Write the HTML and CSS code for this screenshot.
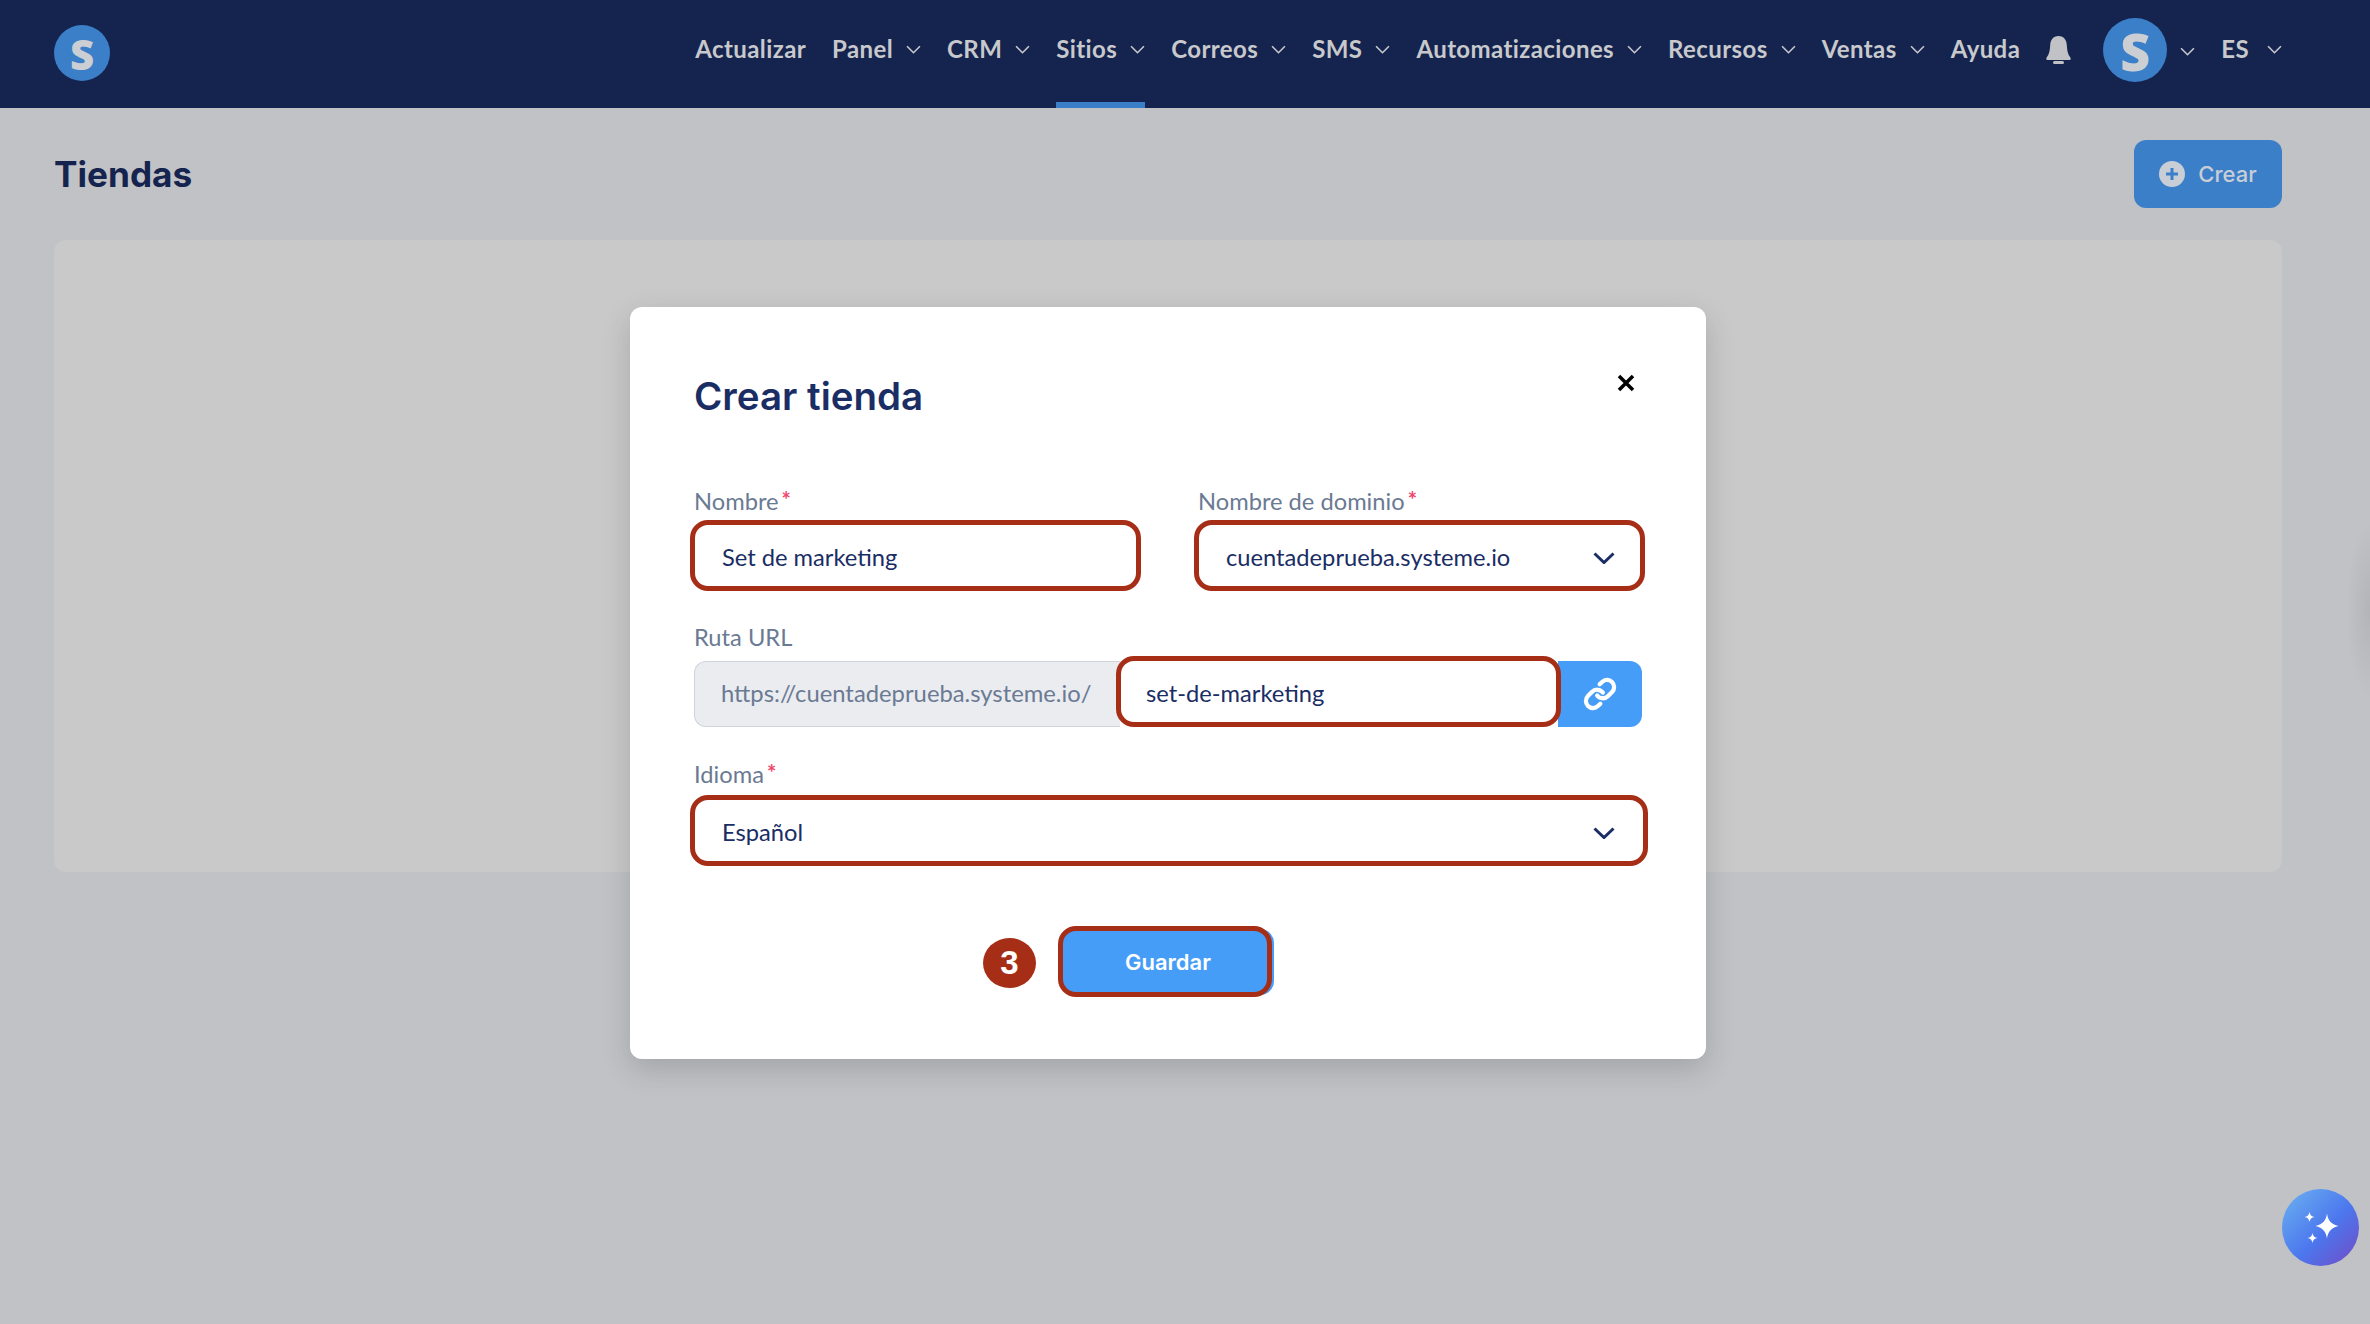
FILE: index.html
```html
<!DOCTYPE html>
<html lang="es">
<head>
  <meta charset="UTF-8" />
  <meta name="viewport" content="width=device-width, initial-scale=1.0" />
  <title>Tiendas</title>
  <link rel="stylesheet" href="styles.css">
</head>
<body>
  <header class="topbar">
    <a class="logo">S</a>
    <nav class="nav">
      <a class="nav-item">Actualizar</a>
      <a class="nav-item">Panel <svg class="chev" viewBox="0 0 14 8"><path d="M1 1l6 6 6-6"/></svg></a>
      <a class="nav-item">CRM <svg class="chev" viewBox="0 0 14 8"><path d="M1 1l6 6 6-6"/></svg></a>
      <a class="nav-item active">Sitios <svg class="chev" viewBox="0 0 14 8"><path d="M1 1l6 6 6-6"/></svg></a>
      <a class="nav-item">Correos <svg class="chev" viewBox="0 0 14 8"><path d="M1 1l6 6 6-6"/></svg></a>
      <a class="nav-item">SMS <svg class="chev" viewBox="0 0 14 8"><path d="M1 1l6 6 6-6"/></svg></a>
      <a class="nav-item">Automatizaciones <svg class="chev" viewBox="0 0 14 8"><path d="M1 1l6 6 6-6"/></svg></a>
      <a class="nav-item">Recursos <svg class="chev" viewBox="0 0 14 8"><path d="M1 1l6 6 6-6"/></svg></a>
      <a class="nav-item">Ventas <svg class="chev" viewBox="0 0 14 8"><path d="M1 1l6 6 6-6"/></svg></a>
      <a class="nav-item">Ayuda</a>
      <svg class="bell" viewBox="0 0 25 28"><path d="M12.500 0C18 0 20.500 4 20.800 9c.3 5 .7 9 3.500 12.500.9 1.200.3 2.500-1.200 2.500H1.900C.4 24-.2 22.700.7 21.500 3.500 18 3.900 14 4.200 9 4.500 4 7 0 12.500 0z"/><rect x="7" y="25" width="11" height="3" rx="1.500"/></svg>
      <div class="account">
        <span class="avatar">S</span>
        <svg class="chev" viewBox="0 0 14 8"><path d="M1 1l6 6 6-6"/></svg>
      </div>
      <a class="nav-item lang">ES <svg class="chev" viewBox="0 0 14 8"><path d="M1 1l6 6 6-6"/></svg></a>
    </nav>
  </header>

  <main class="page">
    <div class="page-head">
      <h1>Tiendas</h1>
      <button class="btn-create">
        <svg class="plus" viewBox="0 0 26 26"><circle cx="13" cy="13" r="13"/><path d="M13 7v12M7 13h12"/></svg>
        Crear
      </button>
    </div>
    <div class="card"></div>
  </main>

  <div class="modal">
    <h2>Crear tienda</h2>
    <svg class="close" viewBox="0 0 18 18"><path d="M2 2l14 14M16 2L2 16"/></svg>

    <div class="row-two">
      <div class="field">
        <label>Nombre<span class="req">*</span></label>
        <div class="input marked">Set de marketing</div>
      </div>
      <div class="field">
        <label>Nombre de dominio<span class="req">*</span></label>
        <div class="input select marked">
          cuentadeprueba.systeme.io
          <svg class="select-arrow" viewBox="0 0 22 12"><path d="M1.500 1.500L11 10.500l9.500-9"/></svg>
        </div>
      </div>
    </div>

    <div class="field">
      <label>Ruta URL</label>
      <div class="url-group">
        <div class="url-prefix">https://cuentadeprueba.systeme.io/</div>
        <div class="input url-slug marked">set-de-marketing</div>
        <div class="url-btn">
          <svg viewBox="0 0 24 24"><path d="M10 13a5 5 0 0 0 7.540.540l3-3a5 5 0 0 0-7.070-7.070l-1.720 1.710"/><path d="M14 11a5 5 0 0 0-7.540-.540l-3 3a5 5 0 0 0 7.070 7.070l1.710-1.710"/></svg>
        </div>
      </div>
    </div>

    <div class="field field-lang">
      <label>Idioma<span class="req">*</span></label>
      <div class="input select marked">
        Español
        <svg class="select-arrow" viewBox="0 0 22 12"><path d="M1.500 1.500L11 10.500l9.500-9"/></svg>
      </div>
    </div>

    <div class="actions">
      <button class="btn-save marked">
        <span class="step">3</span>
        Guardar
      </button>
    </div>
  </div>

  <button class="fab">
    <svg viewBox="0 0 36 36"><path d="M24 3.500C25 10.500 28 14 35.500 16 28 18 25 21.500 24 28.500 23 21.500 20 18 12.500 16 20 14 23 10.500 24 3.500z"/><path d="M6.500 2C7 5 8.500 6.500 11.500 7 8.500 7.500 7 9 6.500 12 6 9 4.500 7.500 1.500 7 4.500 6.500 6 5 6.500 2z"/><path d="M9.500 23C10 26 11.500 27.500 14.500 28 11.500 28.500 10 30 9.500 33 9 30 7.500 28.500 4.500 28 7.500 27.500 9 26 9.500 23z"/></svg>
  </button>
</body>
</html>
```

FILE: styles.css
```css
* {
  box-sizing: border-box;
}
html, body {
  height: 100%;
}
body {
  margin: 0;
  background: radial-gradient(ellipse 24px 90px at 100% 610px, rgba(0, 0, 0, 0.07), transparent) #c1c2c6;
  font-family: 'Lato', sans-serif;
  overflow: hidden;
  position: relative;
}

/* top bar */
.topbar {
  height: 108px;
  background: #15244f;
  padding: 0 88px 0 54px;
  display: flex;
  align-items: center;
  justify-content: space-between;
}
.logo {
  width: 56px;
  height: 56px;
  border-radius: 50%;
  background: #3b7fc9;
  color: #cbced2;
  font-family: 'Open Sans', sans-serif;
  font-weight: 800;
  font-size: 42px;
  display: flex;
  align-items: center;
  justify-content: center;
  margin-top: -2px;
}
.nav {
  height: 100%;
  display: flex;
  align-items: center;
  gap: 26px;
}
.nav-item {
  height: 100%;
  display: flex;
  align-items: center;
  gap: 13px;
  padding-bottom: 12px;
  color: #c8c9cc;
  font-size: 24px;
  font-weight: 700;
  letter-spacing: 0.4px;
  white-space: nowrap;
}
.nav-item.active {
  box-shadow: inset 0 -6px 0 #3b7fc9;
}
.chev {
  width: 15px;
  height: 9px;
  flex: none;
  margin-top: 3px;
  fill: none;
  stroke: #c8c9cc;
  stroke-width: 1.500;
}
.bell {
  width: 25px;
  height: 28px;
  fill: #c1c2c6;
  margin-top: -8px;
}
.account {
  display: flex;
  align-items: center;
  gap: 13px;
  margin: -8px 0 0 6px;
}
.avatar {
  width: 64px;
  height: 64px;
  border-radius: 50%;
  background: #3b7fc9;
  color: #cbced2;
  font-family: 'Open Sans', sans-serif;
  font-weight: 800;
  font-size: 52px;
  display: flex;
  align-items: center;
  justify-content: center;
}
.lang .chev {
  margin-left: 5px;
}

/* page */
.page {
  padding: 32px 88px 0 54px;
}
.page-head {
  height: 68px;
  display: flex;
  align-items: center;
  justify-content: space-between;
}
h1 {
  margin: 0;
  color: #15244f;
  font-family: 'Inter', sans-serif;
  font-size: 35.200px;
  font-weight: 700;
}
.btn-create {
  width: 148px;
  height: 68px;
  border: none;
  border-radius: 12px;
  background: #3b7fc9;
  color: #c9ced6;
  font-family: 'Inter', sans-serif;
  font-size: 22px;
  font-weight: 500;
  display: flex;
  align-items: center;
  justify-content: center;
  gap: 13px;
}
.plus {
  width: 26px;
  height: 26px;
  fill: #c9ced6;
}
.plus path {
  fill: none;
  stroke: #3b7fc9;
  stroke-width: 3;
}
.card {
  height: 632px;
  margin-top: 32px;
  background: #c9c9c9;
  border-radius: 12px;
}

/* modal */
.modal {
  position: absolute;
  top: 307px;
  left: 630px;
  width: 1076px;
  padding: 64px;
  background: #fff;
  border-radius: 12px;
  box-shadow: 0 10px 30px rgba(0, 0, 0, 0.16);
}
h2 {
  margin: 0;
  height: 50px;
  line-height: 50px;
  color: #1a2d64;
  font-family: 'Inter', sans-serif;
  font-size: 38.500px;
  font-weight: 600;
}
.close {
  position: absolute;
  top: 67px;
  right: 71px;
  width: 18px;
  height: 18px;
  fill: none;
  stroke: #000;
  stroke-width: 3.500;
}
.row-two {
  display: grid;
  grid-template-columns: 444px 444px;
  gap: 60px;
  margin-top: 64px;
}
.field {
  margin-top: 31px;
}
.row-two .field {
  margin-top: 0;
}
label {
  display: block;
  height: 30px;
  line-height: 30px;
  margin-bottom: 9px;
  color: #6b7a93;
  font-size: 23.700px;
}
.row-two label {
  margin-bottom: 10px;
}
.field-lang label {
  margin-bottom: 12px;
}
.req {
  color: #f0466e;
  font-size: 22px;
  font-weight: 700;
  margin-left: 3px;
  vertical-align: 2px;
}
.input {
  position: relative;
  height: 66px;
  padding: 0 28px 2px;
  background: #fff;
  color: #1a2d64;
  font-size: 23.700px;
  display: flex;
  align-items: center;
  justify-content: space-between;
}
.marked::after {
  content: "";
  position: absolute;
  top: -5px;
  right: -3px;
  bottom: 0;
  left: -4px;
  border: 5px solid #a62e17;
  border-radius: 18px;
}
.field-lang .marked::after {
  right: -6px;
}
.select-arrow {
  width: 22px;
  height: 12px;
  flex: none;
  margin: 2px -1px 0 0;
  fill: none;
  stroke: #1a2d64;
  stroke-width: 3;
}
.url-group {
  display: flex;
  height: 66px;
}
.url-prefix {
  width: 426px;
  flex: none;
  padding-left: 26px;
  background: #eaecf0;
  border: 1px solid #cfd4dc;
  border-right: none;
  border-radius: 12px 0 0 12px;
  color: #6b7a93;
  font-size: 23.800px;
  line-height: 62px;
  white-space: nowrap;
}
.url-slug {
  flex: 1;
  padding-left: 26px;
}
.url-btn {
  width: 84px;
  flex: none;
  background: #459df8;
  border-radius: 0 12px 12px 0;
  display: flex;
  align-items: center;
  justify-content: center;
}
.url-btn svg {
  width: 34px;
  height: 34px;
  fill: none;
  stroke: #fff;
  stroke-width: 3;
  stroke-linecap: round;
  stroke-linejoin: round;
}
.actions {
  display: flex;
  justify-content: center;
  margin-top: 63px;
}
.btn-save {
  position: relative;
  width: 212px;
  height: 66px;
  border: none;
  border-radius: 14px;
  background: #459df8;
  color: #fff;
  font-family: 'Inter', sans-serif;
  font-size: 22px;
  font-weight: 600;
}
.btn-save::after {
  top: -3px;
  right: 2px;
  bottom: -2px;
  left: -4px;
}
.step {
  position: absolute;
  top: 9px;
  left: -79px;
  width: 53px;
  height: 50px;
  border-radius: 50%;
  background: #a62e17;
  color: #fff;
  font-family: 'Liberation Sans', sans-serif;
  font-size: 33px;
  font-weight: 700;
  line-height: 50px;
}

/* assistant button */
.fab {
  position: absolute;
  top: 1189px;
  left: 2282px;
  width: 77px;
  height: 77px;
  padding: 0;
  border: none;
  border-radius: 50%;
  background: linear-gradient(135deg, #66a8f0 10%, #4c77ee 55%, #6e4fc9 95%);
  display: flex;
  align-items: center;
  justify-content: center;
}
.fab svg {
  width: 36px;
  height: 36px;
  fill: #fff;
}
```
